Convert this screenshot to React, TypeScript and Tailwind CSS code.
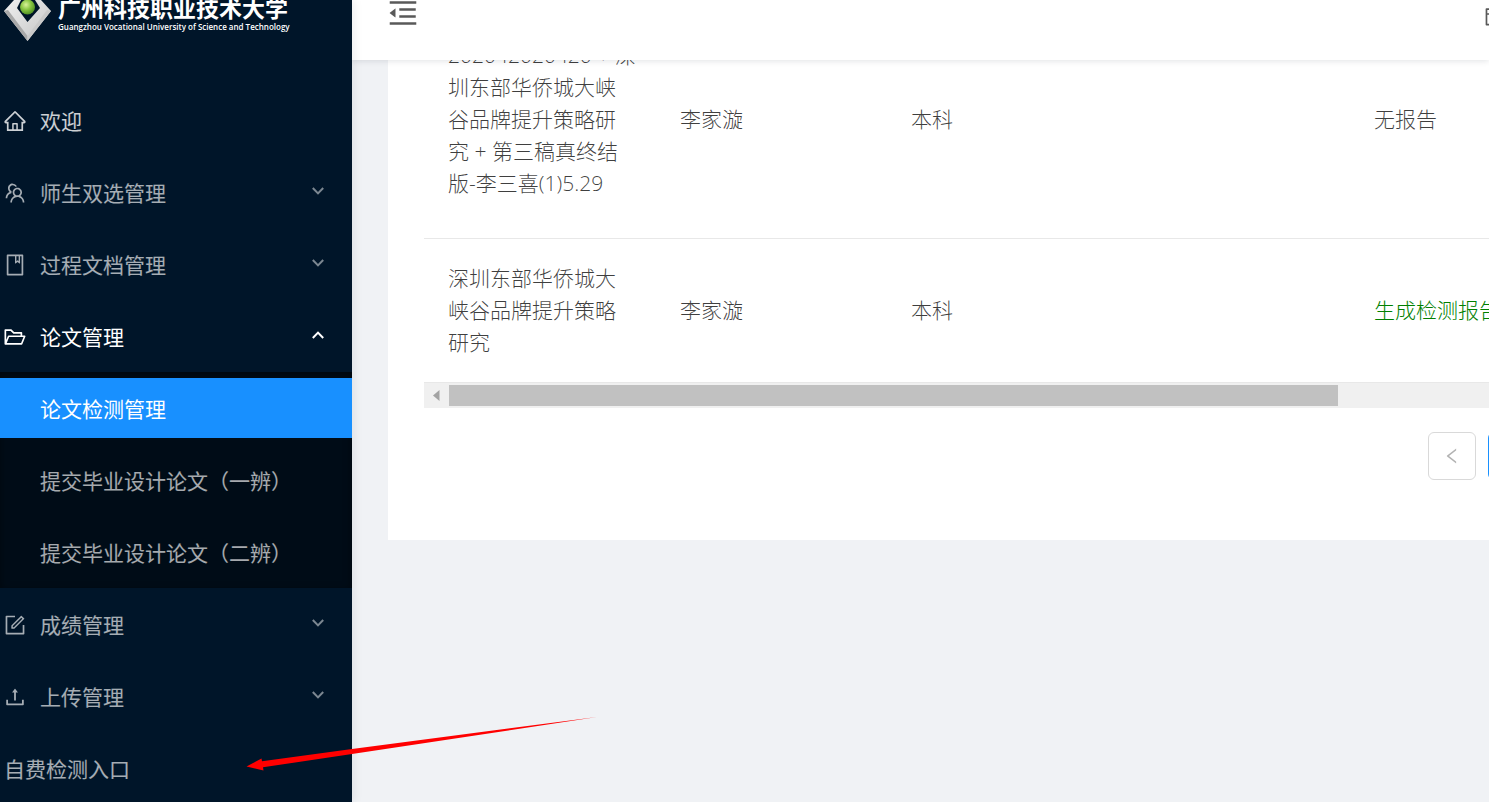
import type { ReactNode } from "react";
import {
  AiOutlineBook,
  AiOutlineCalendar,
  AiOutlineFolderOpen,
  AiOutlineForm,
  AiOutlineHome,
  AiOutlineLeft,
  AiOutlineMenuFold,
  AiOutlineTeam,
  AiOutlineUpload,
} from "react-icons/ai";

const Chevron = ({ up }: { up?: boolean }) => (
  <svg
    viewBox="0 0 12 8"
    className={`ml-auto mb-1 h-2 w-3 ${up ? "" : "opacity-75"}`}
    fill="none"
    stroke="currentColor"
    strokeWidth="2"
    aria-hidden="true"
  >
    <path d={up ? "M0.8 7 6 1.6 11.2 7" : "M0.8 1 6 6.4 11.2 1"} />
  </svg>
);

const Logo = () => (
  <a href="#" className="flex h-[84px] items-start text-white">
    <svg viewBox="0 0 48 42" className="ml-1 h-[42px] w-12 shrink-0" aria-hidden="true">
      <defs>
        <linearGradient id="silver" x1="0" y1="0" x2="1" y2="1">
          <stop offset="0" stopColor="#f0f0f0" />
          <stop offset="1" stopColor="#c4c4c4" />
        </linearGradient>
        <radialGradient id="ball" cx="0.4" cy="0.35" r="0.7">
          <stop offset="0" stopColor="#d8f29a" />
          <stop offset="0.5" stopColor="#86c440" />
          <stop offset="1" stopColor="#4a8a20" />
        </radialGradient>
      </defs>
      <path d="M10 0 0 11 23.5 41 47 11 37 0H31L36 8 23.5 22 13 8 17 0Z" fill="url(#silver)" />
      <path d="M0 11 23.5 41V36L4 10Z" fill="#a9a9a9" />
      <path d="M47 11 23.5 41V36L43 10Z" fill="#c9c9c9" />
      <circle cx="23.5" cy="7" r="7.5" fill="url(#ball)" />
    </svg>
    <span className="ml-[6px] flex flex-col whitespace-nowrap">
      <span className="-mt-[3px] h-[23px] text-[23px] leading-[22px] font-bold">
        广州科技职业技术大学
      </span>
      <span className="text-[8px] leading-[14px] font-semibold">
        Guangzhou Vocational University of Science and Technology
      </span>
    </span>
  </a>
);

type GroupProps = {
  icon: ReactNode;
  label: string;
  open?: boolean;
  children?: ReactNode;
};

const MenuGroup = ({ icon, label, open, children }: GroupProps) => (
  <li>
    <button
      type="button"
      aria-expanded={!!open}
      className={`my-[6px] flex h-[60px] w-full items-center pt-0.5 pr-7 pl-[3px] ${
        open ? "text-white" : "text-white/65"
      }`}
    >
      {icon}
      <span className="ml-[13px]">{label}</span>
      <Chevron up={open} />
    </button>
    {children}
  </li>
);

const subItems = [
  { label: "论文检测管理", active: true },
  { label: "提交毕业设计论文（一辨）", active: false },
  { label: "提交毕业设计论文（二辨）", active: false },
];

const Sidebar = () => (
  <aside className="relative z-20 w-[352px] shrink-0 overflow-hidden bg-[#001529] shadow-[2px_0_9px_rgba(0,21,41,0.08)]">
    <Logo />
    <nav>
      <ul className="flex flex-col">
        <li className="py-[6px]">
          <a href="#" className="flex h-[60px] items-center pt-0.5 pl-[3px] text-white/80">
            <AiOutlineHome className="size-6" />
            <span className="ml-[13px]">欢迎</span>
          </a>
        </li>
        <MenuGroup icon={<AiOutlineTeam className="size-6" />} label="师生双选管理" />
        <MenuGroup icon={<AiOutlineBook className="size-6" />} label="过程文档管理" />
        <MenuGroup icon={<AiOutlineFolderOpen className="size-6" />} label="论文管理" open>
          <ul className="flex flex-col gap-3 bg-[#000c17] py-[6px] shadow-[inset_0_3px_8px_rgba(0,0,0,0.45)]">
            {subItems.map((item) => (
              <li key={item.label}>
                <a
                  href="#"
                  className={`flex h-[60px] items-center pt-0.5 pl-10 ${
                    item.active ? "bg-[#1890ff] text-white" : "text-white/65"
                  }`}
                >
                  {item.label}
                </a>
              </li>
            ))}
          </ul>
        </MenuGroup>
        <MenuGroup icon={<AiOutlineForm className="size-6" />} label="成绩管理" />
        <MenuGroup icon={<AiOutlineUpload className="size-6" />} label="上传管理" />
        <li className="py-[6px]">
          <a href="#" className="flex h-[60px] items-center pt-0.5 pl-1 text-white/65">
            自费检测入口
          </a>
        </li>
      </ul>
    </nav>
  </aside>
);

const rows = [
  {
    title:
      "202042020420 + 深\n圳东部华侨城大峡\n谷品牌提升策略研\n究 + 第三稿真终结\n版-李三喜(1)5.29",
    student: "李家漩",
    level: "本科",
    report: <span>无报告</span>,
    height: "h-[238px]",
  },
  {
    title: "深圳东部华侨城大\n峡谷品牌提升策略\n研究",
    student: "李家漩",
    level: "本科",
    report: (
      <a href="#" className="text-[#008000]">
        生成检测报告
      </a>
    ),
    height: "h-36",
  },
];

const ReportTable = () => (
  <div className="overflow-hidden">
    <table className="w-[1389px] table-fixed border-separate border-spacing-0 text-left font-light text-black/75">
      <colgroup>
        <col className="w-[232px]" />
        <col className="w-[231px]" />
        <col className="w-[232px]" />
        <col className="w-[231px]" />
        <col />
      </colgroup>
      <tbody>
        {rows.map((row) => (
          <tr
            key={row.title}
            className={`${row.height} *:border-b *:border-[#e8e8e8] *:px-6 *:pt-[23px] *:pb-6`}
          >
            <td className="whitespace-pre">{row.title}</td>
            <td>{row.student}</td>
            <td>{row.level}</td>
            <td />
            <td className="whitespace-nowrap">{row.report}</td>
          </tr>
        ))}
      </tbody>
    </table>
    <div className="flex h-[25px] items-center bg-[#f0f0f0]">
      <svg viewBox="0 0 25 25" className="size-[25px] shrink-0" aria-hidden="true">
        <path d="M15.5 7v11L9 12.5Z" fill="#a3a3a3" />
      </svg>
      <div className="h-[21px] w-[889px] bg-[#c1c1c1]" />
    </div>
  </div>
);

const Pagination = () => (
  <div className="-mr-[47px] mt-6 flex justify-end gap-3">
    <button
      type="button"
      aria-label="上一页"
      disabled
      className="flex size-12 items-center justify-center rounded-md border border-[#d9d9d9] text-black/30"
    >
      <AiOutlineLeft className="size-5" />
    </button>
    <button
      type="button"
      className="size-12 rounded-md border border-[#1890ff] text-[#1890ff]"
    >
      1
    </button>
  </div>
);

const Arrow = () => (
  <svg
    viewBox="0 0 352 56"
    className="pointer-events-none absolute left-[246px] top-[716px] z-30 h-14 w-[352px]"
    aria-hidden="true"
  >
    <path d="M0.5 50.5 15.5 42.5 16 45.2 106 33 351 1 106 38 17 51.3 17.5 54.5Z" fill="#ff0000" />
  </svg>
);

const App = () => {
  return (
    <div className="relative flex h-screen overflow-hidden bg-[#f0f2f5] font-['Open_Sans','Noto_Sans_CJK_SC',sans-serif] text-[21px] leading-8">
      <Sidebar />
      <div className="flex min-w-0 flex-1 flex-col overflow-hidden">
        <header className="z-10 flex h-[60px] shrink-0 items-start justify-between bg-white pl-[34px] text-black/65 shadow-[0_1px_6px_rgba(0,21,41,0.12)]">
          <button type="button" aria-label="收起菜单" className="-mt-1">
            <AiOutlineMenuFold className="size-[34px]" />
          </button>
          <button type="button" aria-label="日历" className="-mr-[18px] mt-1">
            <AiOutlineCalendar className="size-6" />
          </button>
        </header>
        <main className="-mt-[60px] ml-9 bg-white pb-[60px] pl-9 pt-px text-black/65">
          <ReportTable />
          <Pagination />
        </main>
      </div>
      <Arrow />
    </div>
  );
};

export default App;
